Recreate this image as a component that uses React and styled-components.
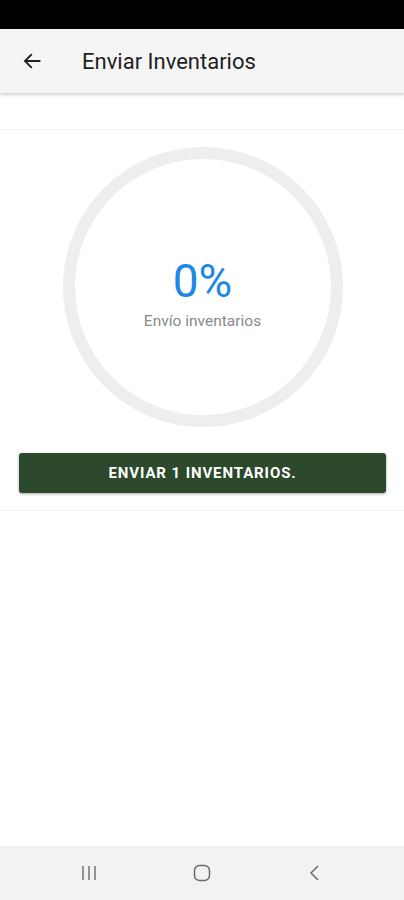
import React from 'react';
import styled, { createGlobalStyle } from 'styled-components';

const GlobalStyle = createGlobalStyle`
  html, body {
    margin: 0;
    padding: 0;
    background: #ffffff;
    font-family: Roboto, 'Liberation Sans', sans-serif;
  }
`;

const Screen = styled.div`
  width: 404px;
  height: 900px;
  display: flex;
  flex-direction: column;
  background: #ffffff;
  overflow: hidden;
`;

const StatusBar = styled.div`
  height: 29px;
  background: #000000;
`;

const AppBar = styled.header`
  height: 64px;
  display: flex;
  align-items: center;
  background: #f5f5f5;
  box-shadow: 0 2px 3px rgba(0, 0, 0, 0.18);
  position: relative;
  z-index: 1;
`;

const BackButton = styled.button`
  width: 64px;
  height: 64px;
  display: flex;
  align-items: center;
  justify-content: center;
  border: none;
  background: transparent;
  padding: 0;
  color: #212121;
`;

const Title = styled.h1`
  margin: 0 0 0 18px;
  font-size: 22px;
  font-weight: 400;
  color: #1f1f1f;
`;

const Main = styled.main`
  flex: 1;
  padding-top: 36px;
`;

const Card = styled.section`
  border-top: 1px solid #f0f0f0;
  border-bottom: 1px solid #f0f0f0;
  padding: 17px 18px 17px 19px;
  display: flex;
  flex-direction: column;
  align-items: center;
  gap: 26px;
`;

const Ring = styled.div`
  box-sizing: border-box;
  width: 280px;
  height: 280px;
  padding-top: 14px;
  border-radius: 50%;
  border: 12px solid #eeeeee;
  display: flex;
  flex-direction: column;
  align-items: center;
  justify-content: center;
`;

const Percent = styled.div`
  font-size: 46px;
  color: #1e88e5;
  line-height: 1;
`;

const Caption = styled.div`
  margin-top: 8px;
  font-size: 15.5px;
  color: #8a8a8a;
`;

const SendButton = styled.button`
  width: 100%;
  height: 40px;
  border: none;
  border-radius: 3px;
  background: #2c4a2b;
  color: #ffffff;
  font-family: Roboto, 'Liberation Sans', sans-serif;
  font-size: 15px;
  font-weight: 700;
  letter-spacing: 0.9px;
  box-shadow: 0 1px 3px rgba(0, 0, 0, 0.35);
`;

const NavBar = styled.nav`
  height: 54px;
  background: #f2f2f2;
  display: grid;
  grid-template-columns: repeat(3, 1fr);
  align-items: center;
  padding: 0 32px;
`;

const NavSlot = styled.div`
  display: flex;
  justify-content: center;
  color: #6b6b6b;
`;

export default function App() {
  return (
    <>
      <GlobalStyle />
      <Screen>
        <StatusBar />
        <AppBar>
          <BackButton aria-label="Volver">
            <svg width="20" height="20" viewBox="0 0 24 24" fill="none" stroke="currentColor" strokeWidth="2.2" strokeLinecap="square">
              <path d="M21 12H4M11 4.5L3.5 12l7.5 7.5" />
            </svg>
          </BackButton>
          <Title>Enviar Inventarios</Title>
        </AppBar>
        <Main>
          <Card>
            <Ring>
              <Percent>0%</Percent>
              <Caption>Envío inventarios</Caption>
            </Ring>
            <SendButton>ENVIAR 1 INVENTARIOS.</SendButton>
          </Card>
        </Main>
        <NavBar>
          <NavSlot>
            <svg width="18" height="16" viewBox="0 0 18 16" fill="none" stroke="currentColor" strokeWidth="1.4">
              <path d="M3 1v14M9 1v14M15 1v14" />
            </svg>
          </NavSlot>
          <NavSlot>
            <svg width="20" height="20" viewBox="0 0 20 20" fill="none" stroke="currentColor" strokeWidth="1.5">
              <rect x="2.5" y="2.5" width="15" height="15" rx="5" />
            </svg>
          </NavSlot>
          <NavSlot>
            <svg width="14" height="18" viewBox="0 0 14 18" fill="none" stroke="currentColor" strokeWidth="1.5">
              <path d="M10 2L3 9l7 7" />
            </svg>
          </NavSlot>
        </NavBar>
      </Screen>
    </>
  );
}
